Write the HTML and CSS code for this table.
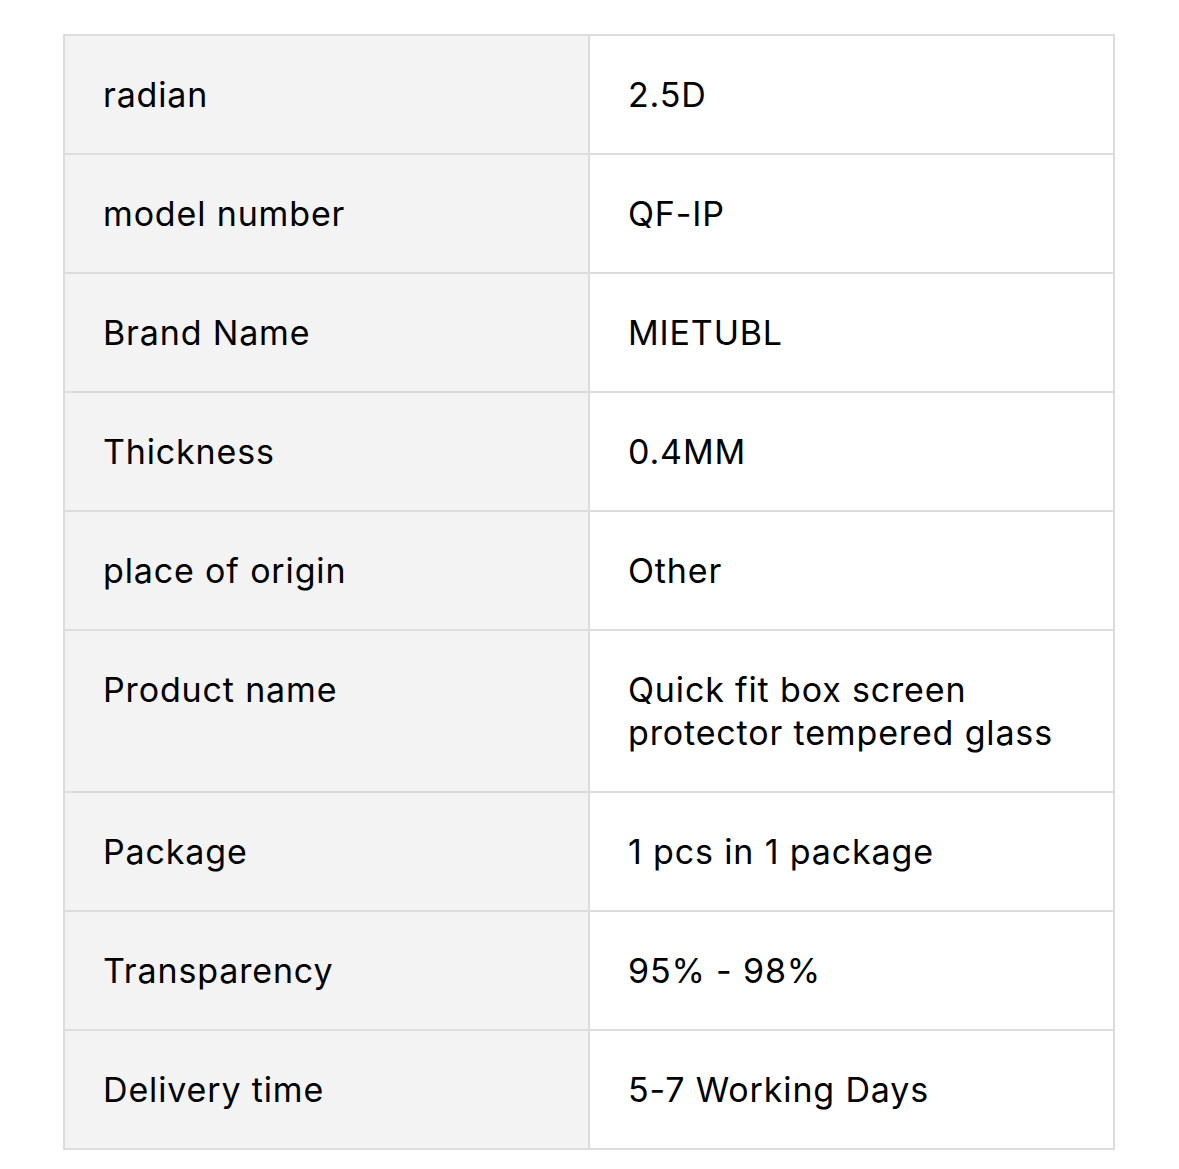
FILE: index.html
```html
<!DOCTYPE html>
<html>
<head>
<meta charset="utf-8">
<link rel="stylesheet" href="styles.css">
</head>
<body>
<div class="spec">
  <div class="k">radian</div><div class="v">2.5D</div>
  <div class="k">model number</div><div class="v">QF-IP</div>
  <div class="k">Brand Name</div><div class="v">MIETUBL</div>
  <div class="k">Thickness</div><div class="v">0.4MM</div>
  <div class="k">place of origin</div><div class="v">Other</div>
  <div class="k">Product name</div><div class="v">Quick fit box screen protector tempered glass</div>
  <div class="k">Package</div><div class="v">1 pcs in 1 package</div>
  <div class="k">Transparency</div><div class="v">95% - 98%</div>
  <div class="k">Delivery time</div><div class="v">5-7 Working Days</div>
</div>
</body>
</html>
```
FILE: styles.css
```css
html, body { margin: 0; padding: 0; background: #fff; }
body { font-family: Inter, "Open Sans", sans-serif; color: #000; }
.spec {
  margin: 34px 0 0 63px;
  width: 1052px;
  box-sizing: border-box;
  padding: 2px;
  background: #dcdcdc;
  display: grid;
  grid-template-columns: 1fr 1fr;
  gap: 2px;
}
.k, .v {
  font-size: 34px;
  letter-spacing: 0.85px;
  line-height: 43px;
  padding: 37px 37px 37px 38px;
}
.k { background: #f3f3f3; }
.v { background: #fff; padding-right: 40px; }
```
